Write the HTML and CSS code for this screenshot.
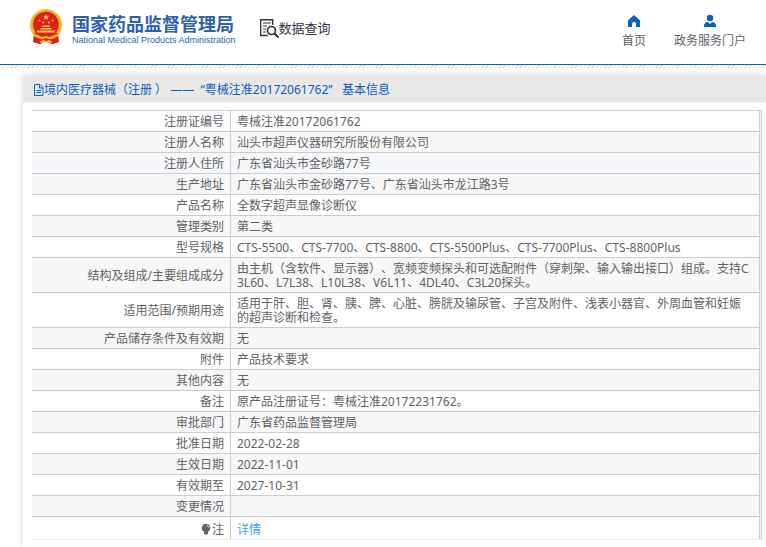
FILE: index.html
```html
<!DOCTYPE html>
<html lang="zh-CN">
<head>
<meta charset="utf-8">
<title>国家药品监督管理局 数据查询</title>
<link rel="stylesheet" href="styles.css">
</head>
<body>
<header class="top">
  <a class="brand" href="#">
    <svg class="emblem" viewBox="0 0 34 36" aria-hidden="true">
      <path d="M6 25 L28 25 L29 33 L23 35 L17 32 L11 35 L5 33Z" fill="#df1f1c"/>
      <circle cx="17" cy="16" r="16" fill="#f2bd3d"/>
      <circle cx="17" cy="16" r="14.5" fill="#e9a92d"/>
      <circle cx="17" cy="15.500" r="12.800" fill="#e2201b"/>
      <path d="M17 5l.8 2.200h2.300l-1.800 1.400.7 2.200-2-1.300-2 1.300.7-2.200-1.800-1.400h2.300z" fill="#fbd34a"/>
      <g fill="#f7c644"><circle cx="10.500" cy="11.500" r="1"/><circle cx="14" cy="13.500" r="1"/><circle cx="20" cy="13.500" r="1"/><circle cx="23.500" cy="11.500" r="1"/>
      <path d="M13 18l1-1.500h6l1 1.500zM11 20.500l1-1.500h10l1 1.500zM8 21.500h18v2H8z"/></g>
      <path d="M5 24h24l1 9-7 2-6-3-6 3-7-2z" fill="#df1f1c"/>
      <path d="M4 24q7 3 10 4l3-1 3 1q3-1 10-4l-1 3q-5 4-9 3l-3-1-3 1q-4 1-9-3z" fill="#f0b836"/>
      <path d="M10 33l4-2 3 1 3-1 4 2-3 1-4-1-4 1z" fill="#f0b836"/>
    </svg>
    <span class="brand-text">
      <span class="brand-cn">国家药品监督管理局</span>
      <span class="brand-en">National Medical Products Administration</span>
    </span>
  </a>
  <a class="query" href="#">
    <svg class="query-icon" viewBox="0 0 20 20" fill="none" stroke="#34343f" aria-hidden="true">
      <path d="M9 17.500H1.700V1.700h12v5" stroke-width="1.400"/>
      <path d="M4 5h8M4 8h4M4 11h3M4 14h3" stroke-width="1.200"/>
      <circle cx="12.500" cy="12.500" r="4" stroke-width="1.700"/>
      <path d="M15.500 15.500l4 4" stroke-width="2.200"/>
    </svg>
    <span>数据查询</span>
  </a>
  <nav class="links">
    <a href="#">
      <svg viewBox="0 0 14 14" aria-hidden="true"><path d="M7 1L13 6.500V13H9V9.500Q9 8 7 8T5 9.500V13H1V6.500z" fill="#0860bf"/></svg>
      <span>首页</span>
    </a>
    <a href="#">
      <svg viewBox="0 0 14 14" aria-hidden="true"><circle cx="7" cy="4" r="3.200" fill="#0860bf"/><path d="M1 13v-2q1-3 4-3l2 2 2-2q3 0 4 3v2z" fill="#0860bf"/></svg>
      <span>政务服务门户</span>
    </a>
  </nav>
</header>
<main class="panel">
  <h1 class="panel-title">
    <svg viewBox="0 0 11 12" fill="none" stroke="#0860bf" aria-hidden="true"><path d="M1.500 .5h5.500l3 3v8h-8.500zM6.500 .5v3.500h3.500M3.500 6.500h4.500M3.500 8.500h4.500"/></svg>
    <span>境内医疗器械（注册 ） ——&nbsp; “粤械注准20172061762”&nbsp;&nbsp; 基本信息</span>
  </h1>
  <div class="table-box">
    <table>
      <tbody>
        <tr><th scope="row">注册证编号</th><td>粤械注准20172061762</td></tr>
        <tr><th scope="row">注册人名称</th><td>汕头市超声仪器研究所股份有限公司</td></tr>
        <tr class="active"><th scope="row">注册人住所</th><td>广东省汕头市金砂路77号</td></tr>
        <tr><th scope="row">生产地址</th><td>广东省汕头市金砂路77号、广东省汕头市龙江路3号</td></tr>
        <tr><th scope="row">产品名称</th><td>全数字超声显像诊断仪</td></tr>
        <tr><th scope="row">管理类别</th><td>第二类</td></tr>
        <tr><th scope="row">型号规格</th><td>CTS-5500、CTS-7700、CTS-8800、CTS-5500Plus、CTS-7700Plus、CTS-8800Plus</td></tr>
        <tr><th scope="row">结构及组成/主要组成成分</th><td>由主机（含软件、显示器）、宽频变频探头和可选配附件（穿刺架、输入输出接口）组成。支持C3L60、L7L38、L10L38、V6L11、4DL40、C3L20探头。</td></tr>
        <tr><th scope="row">适用范围/预期用途</th><td>适用于肝、胆、肾、胰、脾、心脏、膀胱及输尿管、子宫及附件、浅表小器官、外周血管和妊娠的超声诊断和检查。</td></tr>
        <tr><th scope="row">产品储存条件及有效期</th><td>无</td></tr>
        <tr><th scope="row">附件</th><td>产品技术要求</td></tr>
        <tr><th scope="row">其他内容</th><td>无</td></tr>
        <tr><th scope="row">备注</th><td>原产品注册证号：粤械注准20172231762。</td></tr>
        <tr><th scope="row">审批部门</th><td>广东省药品监督管理局</td></tr>
        <tr><th scope="row">批准日期</th><td>2022-02-28</td></tr>
        <tr><th scope="row">生效日期</th><td>2022-11-01</td></tr>
        <tr><th scope="row">有效期至</th><td>2027-10-31</td></tr>
        <tr><th scope="row">变更情况</th><td></td></tr>
        <tr class="note"><th scope="row"><svg class="bulb" viewBox="0 0 10 12" aria-hidden="true"><circle cx="5" cy="5" r="4.300" fill="#606266"/><path d="M3 9h4v1.200L6 11.500H4L3 10.200z" fill="#606266"/><path d="M5.500 2.200Q7.500 2.700 7.700 4.700" fill="none" stroke="#fff" stroke-width=".8"/></svg>注</th><td><a href="#">详情</a></td></tr>
      </tbody>
    </table>
  </div>
</main>
</body>
</html>
```
FILE: styles.css
```css
* {
  box-sizing: border-box;
}

body {
  margin: 0;
  background: #fff;
  color: #606266;
  font: 12px/14px "Noto Sans", "Noto Sans CJK SC", sans-serif;
  text-spacing-trim: space-all;
}

a {
  color: inherit;
  text-decoration: none;
}

.top {
  display: flex;
  align-items: flex-start;
  height: 65px;
  padding: 9px 20px 0 29px;
  border-bottom: 1px solid #0860bf;
}

.brand {
  display: flex;
  gap: 9px;
  color: #2f5fad;
}

.emblem {
  width: 34px;
  height: 36px;
}

.brand-text {
  display: flex;
  flex-direction: column;
  padding-top: 3px;
  white-space: nowrap;
}

.brand-cn {
  font: bold 18px/22px "Noto Sans CJK SC", sans-serif;
}

.brand-en {
  font: 9px/12px "Liberation Sans", sans-serif;
}

.query {
  display: flex;
  align-items: center;
  margin: 9px 0 0 23px;
  color: #34343f;
  font-size: 13px;
  line-height: 20px;
}

.query-icon {
  width: 20px;
  height: 20px;
}

.links {
  display: flex;
  gap: 28px;
  margin-left: auto;
  padding-top: 5px;
}

.links a {
  display: flex;
  flex-direction: column;
  align-items: center;
  gap: 6px;
}

.links svg {
  width: 14px;
  height: 14px;
}

.panel {
  margin: 10px 0 0 23px;
  padding-bottom: 7px;
  box-shadow: 0 0 8px rgba(0, 0, 0, 0.15);
}

.panel-title {
  display: flex;
  align-items: center;
  height: 28px;
  margin: 0;
  padding: 2px 10px 0;
  border-bottom: 1px solid #ebeef5;
  background: #e8e8e8;
  color: #0860bf;
  font-size: 12px;
  font-weight: normal;
}

.panel-title svg {
  width: 11px;
  height: 12px;
}

.table-box {
  margin: 7px 4px 0 9px;
  padding-right: 1px;
  border-top: 1px solid #ccc;
  border-right: 1px solid #ccc;
  border-bottom: 1px solid #ebeef5;
  background: #ebeef5;
}

table {
  width: 100%;
  border-collapse: separate;
  border-spacing: 0;
  border-right: 1px solid #ccc;
  background: #fff;
}

th,
td {
  padding: 4px 6px 2px;
  border-bottom: 1px solid #ccc;
  font-weight: normal;
}

th {
  width: 199px;
  height: 21px;
  border-right: 1px solid #ccc;
  text-align: right;
}

td {
  padding-right: 10px;
  text-align: left;
  word-break: break-all;
}

tr:nth-child(even) {
  background: #f7f7f7;
}

tr.active {
  background: #f5f7fa;
}

.note th,
.note td {
  height: 22px;
  padding-top: 5px;
  border-bottom: 0;
}

.note a {
  color: #409eff;
}

.bulb {
  width: 10px;
  height: 12px;
  margin-right: 1px;
  vertical-align: -1px;
}

body::before {
  content: "";
  position: absolute;
  top: 65px;
  left: 0;
  right: 0;
  height: 3px;
  background: repeating-linear-gradient(135deg, #ddd 0 1px, #fff 1px 3px);
}
```
